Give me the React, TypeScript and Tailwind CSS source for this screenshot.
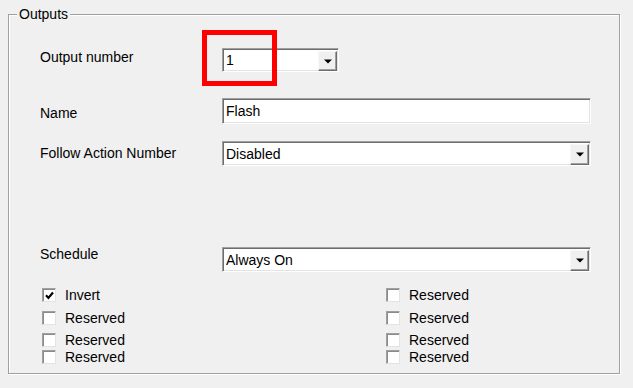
import React from 'react';

const sunken =
  'border border-t-[#a0a0a0] border-l-[#a0a0a0] border-r-white border-b-white shadow-[inset_1px_1px_0_#6d6d6d,inset_-1px_-1px_0_#e3e3e3] bg-white';

const DropButton = () => (
  <div className="w-[19px] h-full my-px mr-px flex items-center justify-center bg-[#f0f0f0] border border-t-[#f7f7f7] border-l-[#f7f7f7] border-r-[#6d6d6d] border-b-[#6d6d6d] shadow-[inset_-1px_-1px_0_#a0a0a0]">
    <svg width="8" height="5" viewBox="0 0 8 5">
      <path d="M0 0.5h8L4 4.5z" fill="#000" />
    </svg>
  </div>
);

const Combo = ({ value, className }: { value: string; className: string }) => (
  <div className={`${sunken} ${className} flex items-stretch`}>
    <div className="flex-1 pl-[3px] flex items-center leading-[16px]">{value}</div>
    <div className="py-px flex">
      <DropButton />
    </div>
  </div>
);

const Check = ({ label, checked }: { label: string; checked?: boolean }) => (
  <div className="flex items-center h-[16px]">
    <div className="w-[14px] h-[14px] bg-white border border-t-[#a0a0a0] border-l-[#a0a0a0] border-r-[#e3e3e3] border-b-[#e3e3e3] shadow-[inset_1px_1px_0_#8a8a8a] flex items-center justify-center">
      {checked && (
        <svg width="9" height="9" viewBox="0 0 9 9">
          <path d="M1 4.3l2.4 2.6L8 1.5" stroke="#000" strokeWidth="2.2" fill="none" />
        </svg>
      )}
    </div>
    <span className="ml-[9px] leading-[16px]">{label}</span>
  </div>
);

const CheckRow = ({ left, right, checked, className }: { left: string; right: string; checked?: boolean; className: string }) => (
  <div className={`flex ml-[2px] ${className}`}>
    <div className="w-[344px]">
      <Check label={left} checked={checked} />
    </div>
    <Check label={right} />
  </div>
);

export default function App() {
  return (
    <div className="relative w-[633px] h-[388px] bg-[#f0f0f0] pt-[14px] pl-[8px] text-[14px] text-black font-['Liberation_Sans',Arial,sans-serif]">
      <div className="relative w-[612px] h-[360px] border border-[#a0a0a0] shadow-[inset_1px_1px_0_#fff,1px_1px_0_#fff]">
        <div className="absolute left-[8px] -top-[9px] px-[2px] bg-[#f0f0f0] leading-[16px]">Outputs</div>

        <div className="flex flex-col pl-[31px] pt-[33px]">
          <div className="flex items-start h-[24px]">
            <div className="w-[182px] mt-px leading-[16px]">Output number</div>
            <Combo value="1" className="w-[117px] h-[24px]" />
          </div>

          <div className="flex items-start h-[26px] mt-[26px]">
            <div className="w-[182px] mt-[7px] leading-[16px]">Name</div>
            <div className={`${sunken} w-[369px] h-[26px] pl-[3px] flex items-center leading-[16px]`}>Flash</div>
          </div>

          <div className="flex items-start h-[25px] mt-[17px]">
            <div className="w-[182px] mt-[4px] leading-[16px]">Follow Action Number</div>
            <Combo value="Disabled" className="w-[369px] h-[25px]" />
          </div>

          <div className="flex items-start h-[25px] mt-[81px]">
            <div className="w-[182px] -mt-px leading-[16px]">Schedule</div>
            <Combo value="Always On" className="w-[369px] h-[25px]" />
          </div>

          <CheckRow left="Invert" right="Reserved" checked className="mt-[15px]" />
          <CheckRow left="Reserved" right="Reserved" className="mt-[7px]" />
          <CheckRow left="Reserved" right="Reserved" className="mt-[6px]" />
          <CheckRow left="Reserved" right="Reserved" className="mt-px" />
        </div>
      </div>

      {/* red highlight drawn over the output number box */}
      <div className="absolute left-[202px] top-[30px] w-[75px] h-[56px] border-[5px] border-[#ff0000]" />
    </div>
  );
}
